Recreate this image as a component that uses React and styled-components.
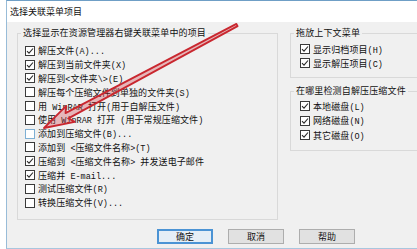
import React from "react";
import styled, { createGlobalStyle } from "styled-components";

const Global = createGlobalStyle`
  html, body { margin: 0; padding: 0; background: #ffffff; }
  body { font-family: "Noto Sans CJK SC", "Liberation Mono", sans-serif; }
`;

const Page = styled.div`
  position: relative;
  width: 417px;
  height: 249px;
  overflow: hidden;
  background: #ffffff;
`;

const Window = styled.div`
  box-sizing: border-box;
  margin-left: 6px;
  width: 470px;
  height: 249px;
  border-left: 1px solid #98bcd8;
  border-top: 1px solid #6f9fc6;
  border-bottom: 1px solid #a9c6de;
  display: flex;
  flex-direction: column;
  background: #f0f0f0;
`;

const TitleBar = styled.div`
  height: 21px;
  flex: none;
  background: #ffffff;
  padding-left: 3px;
  font-size: 9px;
  line-height: 22px;
  color: #111;
`;

const Body = styled.div`
  flex: 1;
  padding: 5px 0 0 10px;
  display: flex;
  flex-direction: column;
`;

const Columns = styled.div`
  display: flex;
  gap: 12px;
  align-items: flex-start;
`;

const RightCol = styled.div`
  display: flex;
  flex-direction: column;
  gap: 7px;
  width: 170px;
`;

const Group = styled.fieldset`
  margin: 0;
  padding: ${(p) => p.$pad || "0 0 8px 0"};
  border: 1px solid #d9d9d9;
  width: ${(p) => p.$w || "auto"};
  box-sizing: border-box;
  min-width: 0;
`;

const Legend = styled.legend`
  margin-left: 3px;
  padding: 0 2px;
  font-size: 9px;
  line-height: 12px;
  color: #111;
  letter-spacing: 0.15px;
`;

const Row = styled.div`
  display: flex;
  align-items: center;
  height: ${(p) => p.$h}px;
  padding-left: ${(p) => p.$indent}px;
  font-size: 9px;
  color: #111;
  white-space: pre;
  letter-spacing: 0.1px;
`;

const Latin = styled.span`
  font-family: "Liberation Mono", monospace;
  font-size: 8.5px;
  letter-spacing: 0;
`;

const Box = styled.span`
  box-sizing: border-box;
  width: 10px;
  height: 10px;
  flex: none;
  border: 1px solid ${(p) => (p.$hover ? "#7eb0d4" : "#3a3a3a")};
  background: #ffffff;
  margin-right: 3px;
  display: flex;
  align-items: center;
  justify-content: center;
`;

const ButtonRow = styled.div`
  display: flex;
  gap: 15px;
  margin-top: 9px;
  padding-left: 140px;
`;

const Button = styled.div`
  box-sizing: border-box;
  width: 56px;
  height: 15px;
  display: flex;
  align-items: center;
  justify-content: center;
  font-size: 9px;
  color: #111;
  background: ${(p) => (p.$default ? "#e5eef6" : "#e1e1e1")};
  border: ${(p) => (p.$default ? "2px solid #4b93d4" : "1px solid #adadad")};
`;

const ArrowLayer = styled.svg`
  position: absolute;
  left: 0;
  top: 0;
  pointer-events: none;
`;

function Text({ children }) {
  const parts = children.split(/([\x20-\x7e]+)/).filter(Boolean);
  return (
    <span>
      {parts.map((p, i) =>
        /^[\x20-\x7e]+$/.test(p) ? <Latin key={i}>{p}</Latin> : <React.Fragment key={i}>{p}</React.Fragment>
      )}
    </span>
  );
}

function Check({ checked, hover }) {
  return (
    <Box $hover={hover}>
      {checked && (
        <svg width="8" height="8" viewBox="0 0 8 8">
          <polyline points="1,4.2 3,6.2 7,1.5" fill="none" stroke="#2a2a2a" strokeWidth="1.1" />
        </svg>
      )}
    </Box>
  );
}

function Item({ label, checked, hover, h, indent }) {
  return (
    <Row $h={h} $indent={indent}>
      <Check checked={checked} hover={hover} />
      <Text>{label}</Text>
    </Row>
  );
}

const leftItems = [
  ["解压文件(A)...", true],
  ["解压到当前文件夹(X)", true],
  ["解压到<文件夹\\>(E)", true],
  ["解压每个压缩文件到单独的文件夹(S)", false],
  ["用 WinRAR 打开(用于自解压文件)", false],
  ["使用 WinRAR 打开 (用于常规压缩文件)", false],
  ["添加到压缩文件(B)...", false, true],
  ["添加到 <压缩文件名称>(T)", false],
  ["压缩到 <压缩文件名称> 并发送电子邮件", true],
  ["压缩并 E-mail...", true],
  ["测试压缩文件(R)", false],
  ["转换压缩文件(V)...", false],
];

const dragItems = ["显示归档项目(H)", "显示解压项目(C)"];
const diskItems = ["本地磁盘(L)", "网络磁盘(N)", "其它磁盘(O)"];

function Arrow() {
  const tip = [44, 128];
  const tail = [237, 25];
  const dx = tail[0] - tip[0];
  const dy = tail[1] - tip[1];
  const len = Math.hypot(dx, dy);
  const u = [dx / len, dy / len];
  const n = [-u[1], u[0]];
  const at = (d, w) => [tip[0] + u[0] * d + n[0] * w, tip[1] + u[1] * d + n[1] * w];
  const pts = [tip, at(30, 9), at(26, 3), at(len, 1.2), at(len, -1.2), at(26, -3), at(30, -9)];
  const s = pts.map((p) => p.map((v) => v.toFixed(1)).join(",")).join(" ");
  return (
    <ArrowLayer width="417" height="249" viewBox="0 0 417 249">
      <polygon points={s} fill="rgba(210,50,60,0.3)" stroke="#c9272f" strokeWidth="1.8" strokeLinejoin="round" />
    </ArrowLayer>
  );
}

export default function App() {
  return (
    <Page>
      <Global />
      <Window>
        <TitleBar>选择关联菜单项目</TitleBar>
        <Body>
          <Columns>
            <Group $w="261px" $pad="5px 0 9px 0">
              <Legend>选择显示在资源管理器右键关联菜单中的项目</Legend>
              {leftItems.map(([label, checked, hover]) => (
                <Item key={label} label={label} checked={checked} hover={hover} h={13.8} indent={7} />
              ))}
            </Group>
            <RightCol>
              <Group $pad="3px 0 7px 0">
                <Legend>拖放上下文菜单</Legend>
                {dragItems.map((l) => (
                  <Item key={l} label={l} checked h={14} indent={9} />
                ))}
              </Group>
              <Group $pad="2px 0 7px 0">
                <Legend>在哪里检测自解压压缩文件</Legend>
                {diskItems.map((l) => (
                  <Item key={l} label={l} checked h={14.5} indent={9} />
                ))}
              </Group>
            </RightCol>
          </Columns>
          <ButtonRow>
            <Button $default>确定</Button>
            <Button>取消</Button>
            <Button>帮助</Button>
          </ButtonRow>
        </Body>
      </Window>
      <Arrow />
    </Page>
  );
}
